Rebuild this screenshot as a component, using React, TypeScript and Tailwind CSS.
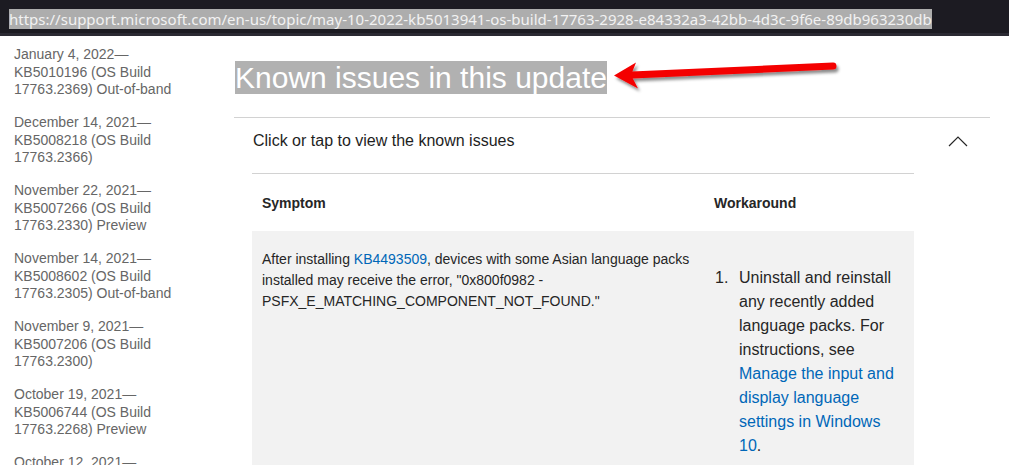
import React from 'react';

const url =
  'https://support.microsoft.com/en-us/topic/may-10-2022-kb5013941-os-build-17763-2928-e84332a3-42bb-4d3c-9f6e-89db963230db';

const sideItems = [
  ['January 4, 2022—', 'KB5010196 (OS Build', '17763.2369) Out-of-band'],
  ['December 14, 2021—', 'KB5008218 (OS Build', '17763.2366)'],
  ['November 22, 2021—', 'KB5007266 (OS Build', '17763.2330) Preview'],
  ['November 14, 2021—', 'KB5008602 (OS Build', '17763.2305) Out-of-band'],
  ['November 9, 2021—', 'KB5007206 (OS Build', '17763.2300)'],
  ['October 19, 2021—', 'KB5006744 (OS Build', '17763.2268) Preview'],
  ['October 12, 2021—', 'KB5006672 (OS Build', '17763.2237)'],
];

const RedArrow = () => (
  <svg
    className="absolute left-0 top-0 pointer-events-none"
    width="1009"
    height="465"
    viewBox="0 0 1009 465"
  >
    <defs>
      <filter id="shadow" x="-10%" y="-50%" width="120%" height="200%">
        <feDropShadow dx="2" dy="3" stdDeviation="1.6" floodColor="#000" floodOpacity="0.45" />
      </filter>
    </defs>
    <g filter="url(#shadow)">
      <line x1="632" y1="75" x2="833" y2="66" stroke="#f40000" strokeWidth="7" strokeLinecap="round" />
      <polygon points="614,75.5 636,62.5 631,75 638,88.5" fill="#f40000" />
    </g>
  </svg>
);

const ChevronUp = () => (
  <svg width="20" height="11" viewBox="0 0 20 11" fill="none">
    <path d="M1 10 L10 1 L19 10" stroke="#262626" strokeWidth="1.2" />
  </svg>
);

export default function App() {
  return (
    <div className="relative h-[465px] w-[1009px] overflow-hidden bg-white font-['Liberation_Sans',Arial,sans-serif]">
      {/* address bar */}
      <div className="h-[36px] bg-[#1c1b22] border-b-[3px] border-[#2b2a33] pl-[9px] pt-[8px]">
        <span className="bg-[#adadad] text-[#f2f2f2] text-[15px] leading-[18px] font-['Noto_Sans',sans-serif] whitespace-nowrap">
          {url}
        </span>
      </div>

      <div className="flex">
        {/* sidebar */}
        <div className="w-[234px] shrink-0 pl-[14px] pt-[10px]">
          <div className="w-[180px] flex flex-col gap-[15.5px] text-[14px] leading-[17.5px] text-[#666666]">
            {sideItems.map((it, i) => (
              <div key={i}>
                <div>{it[0]}</div>
                <div>{it[1]}</div>
                <div>{it[2]}</div>
              </div>
            ))}
          </div>
        </div>

        {/* main */}
        <div className="w-[756px] pt-[24px]">
          <h2 className="ml-px text-[30px] leading-[35px] font-normal">
            <span className="bg-[#b1b1b1] text-white">Known issues in this update</span>
          </h2>

          <div className="mt-[22px] border-t border-[#d2d2d2]">
            <div className="flex items-center justify-between pl-[19px] pr-[22px] pt-[11px] pb-[9px]">
              <span className="text-[16px] leading-[24px] text-[#1e1e1e]">
                Click or tap to view the known issues
              </span>
              <ChevronUp />
            </div>

            <div className="ml-[18px] mt-[11px] w-[662px] border-t border-[#d2d2d2] text-[#262626]">
              <div className="grid grid-cols-[452px_210px]">
                <div className="px-[10px] pt-[19px] pb-[17px] text-[14px] leading-[21px] font-bold">Symptom</div>
                <div className="px-[10px] pt-[19px] pb-[17px] text-[14px] leading-[21px] font-bold">Workaround</div>
              </div>
              <div className="grid grid-cols-[452px_210px] bg-[#f2f2f2] h-[300px]">
                <div className="px-[10px] pt-[18px] text-[14px] leading-[21px]">
                  After installing <span className="text-[#0067b8]">KB4493509</span>, devices with some Asian
                  language packs installed may receive the error, "0x800f0982 -
                  PSFX_E_MATCHING_COMPONENT_NOT_FOUND."
                </div>
                <div className="px-[10px] pt-[18px]">
                  <div className="mt-[17px] flex text-[16px] leading-[24px]">
                    <span className="w-[25px] shrink-0 pl-px">1.</span>
                    <span>
                      Uninstall and reinstall any recently added language packs. For instructions, see{' '}
                      <span className="text-[#0067b8]">
                        Manage the input and display language settings in Windows 10
                      </span>
                      .
                    </span>
                  </div>
                </div>
              </div>
            </div>
          </div>
        </div>
      </div>

      <RedArrow />
    </div>
  );
}
